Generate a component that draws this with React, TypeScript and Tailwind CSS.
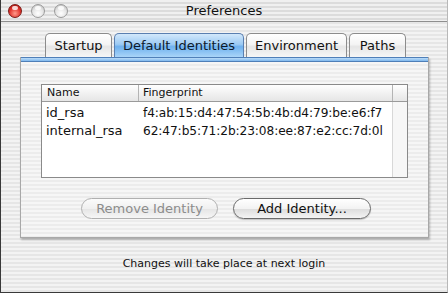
import React from "react";

const stripes =
  "bg-[image:repeating-linear-gradient(180deg,#f3f3f3_0px,#f3f3f3_2px,#e6e6e6_2px,#e6e6e6_4px)]";
const panelStripes =
  "bg-[image:repeating-linear-gradient(180deg,#f6f6f6_0px,#f6f6f6_2px,#ececec_2px,#ececec_4px)]";

function Light({ color }: { color: "red" | "gray" }) {
  const cls =
    color === "red"
      ? "bg-[radial-gradient(circle_at_50%_70%,#ff9a8a_0%,#e0312a_55%,#9a1410_100%)] border-[#7a1a16]"
      : "bg-[radial-gradient(circle_at_50%_70%,#ffffff_0%,#e2e2e2_55%,#b4b4b4_100%)] border-[#9a9a9a]";
  return (
    <div className={`relative w-[14px] h-[14px] rounded-full border ${cls}`}>
      <div className="absolute left-[3px] top-[1px] w-[6px] h-[4px] rounded-full bg-white/80" />
    </div>
  );
}

function Tab({ label, w, selected }: { label: string; w: string; selected?: boolean }) {
  return (
    <div
      className={`${w} h-[24px] rounded-t-[5px] border border-b-0 flex items-center justify-center text-[13px] ${
        selected
          ? "border-[#5a7fb0] bg-[linear-gradient(180deg,#d2e8fb_0%,#9ccaf3_45%,#6fb1ee_55%,#a9d4f8_100%)] text-[#0c1a2c]"
          : "border-[#8c8c8c] bg-[linear-gradient(180deg,#ffffff_0%,#f4f4f4_45%,#e6e6e6_55%,#f6f6f6_100%)] text-[#111]"
      }`}
    >
      {label}
    </div>
  );
}

function Button({ label, disabled, w }: { label: string; disabled?: boolean; w: string }) {
  return (
    <div
      className={`${w} h-[21px] rounded-full border flex items-center justify-center text-[13px] ${
        disabled
          ? "border-[#b0b0b0] text-[#8c8c8c] bg-[linear-gradient(180deg,#fbfbfb_0%,#f0f0f0_50%,#e6e6e6_55%,#f6f6f6_100%)]"
          : "border-[#6a6a6a] text-[#111] bg-[linear-gradient(180deg,#ffffff_0%,#f3f3f3_50%,#dedede_55%,#f4f4f4_100%)] shadow-[0_1px_1px_rgba(0,0,0,0.2)]"
      }`}
    >
      {label}
    </div>
  );
}

export default function App() {
  return (
    <div
      className={`w-[448px] h-[293px] flex flex-col overflow-hidden border-l border-b border-[#3a3a3a] border-r-[#b8b8b8] border-r ${stripes}`}
      style={{ fontFamily: '"DejaVu Sans", "Liberation Sans", sans-serif' }}
    >
      {/* title bar */}
      <div className="relative h-[22px] shrink-0 border-b border-[#8e8e8e] bg-[image:repeating-linear-gradient(180deg,#f0f0f0_0px,#f0f0f0_2px,#dcdcdc_2px,#dcdcdc_4px)] flex items-center">
        <div className="flex items-center gap-[9px] pl-[7px]">
          <Light color="red" />
          <Light color="gray" />
          <Light color="gray" />
        </div>
        <div className="absolute inset-0 flex items-center justify-center text-[13px] text-[#111]">
          Preferences
        </div>
      </div>

      {/* tabs */}
      <div className="flex pl-[44px] pt-[10px] gap-[2px] h-[35px] shrink-0 items-end">
        <Tab label="Startup" w="w-[67px]" />
        <Tab label="Default Identities" w="w-[130px]" selected />
        <Tab label="Environment" w="w-[101px]" />
        <Tab label="Paths" w="w-[57px]" />
      </div>

      {/* panel */}
      <div className="ml-[19px] w-[409px] h-[181px] flex flex-col border-l border-r border-b border-[#a8a8a8] shadow-[1px_2px_2px_rgba(0,0,0,0.25)]">
        <div className="h-[5px] shrink-0 border-t border-b border-[#4f7fb8] bg-[linear-gradient(180deg,#bcdcf8_0%,#7fb8ee_100%)]" />
        <div className={`flex-1 flex flex-col ${panelStripes}`}>
          {/* table */}
          <div className="ml-[20px] mt-[22px] w-[367px] h-[94px] border border-[#8a8a8a] bg-white flex flex-col">
            <div className="h-[17px] flex border-b border-[#9a9a9a] bg-[linear-gradient(180deg,#ffffff_0%,#f2f2f2_50%,#e6e6e6_100%)] text-[11px] text-[#111]">
              <div className="w-[97px] pl-[5px] flex items-center border-r border-[#b4b4b4]">Name</div>
              <div className="flex-1 pl-[4px] flex items-center border-r border-[#b4b4b4]">Fingerprint</div>
              <div className="w-[14px]" />
            </div>
            <div className="flex-1 flex">
              <div className="flex-1 flex flex-col pt-[2px] text-[13px] text-[#111]">
                <div className="h-[18px] flex items-center">
                  <div className="w-[97px] pl-[4px]">id_rsa</div>
                  <div className="pl-[4px] whitespace-nowrap text-[12.2px] tracking-[-0.1px]">f4:ab:15:d4:47:54:5b:4b:d4:79:be:e6:f7</div>
                </div>
                <div className="h-[18px] flex items-center">
                  <div className="w-[97px] pl-[4px]">internal_rsa</div>
                  <div className="pl-[4px] whitespace-nowrap text-[12.2px] tracking-[-0.1px]">62:47:b5:71:2b:23:08:ee:87:e2:cc:7d:0l</div>
                </div>
              </div>
              <div className="w-[15px] border-l border-[#d8d8d8] bg-[#f7f7f7]" />
            </div>
          </div>
          {/* buttons */}
          <div className="flex mt-[20px] ml-[60px] gap-[15px]">
            <Button label="Remove Identity" disabled w="w-[137px]" />
            <Button label="Add Identity..." w="w-[138px]" />
          </div>
        </div>
      </div>

      <div className="flex-1 flex items-center justify-center text-[11px] text-[#111] pb-[2px]">
        Changes will take place at next login
      </div>
    </div>
  );
}
